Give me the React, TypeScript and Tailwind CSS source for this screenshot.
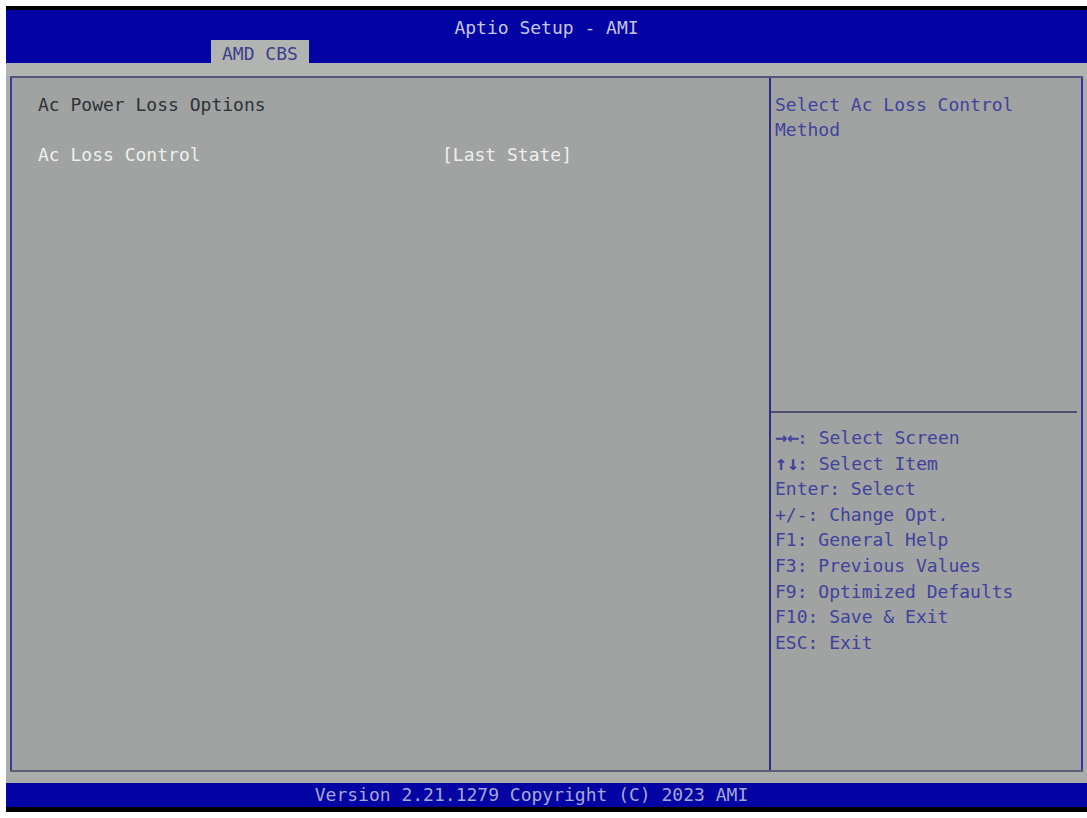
const mono = "font-['DejaVu_Sans_Mono','Liberation_Mono',monospace]";

const helpKeys = [
  { key: "→←", text: ": Select Screen", arrow: true },
  { key: "↑↓", text: ": Select Item", arrow: true },
  { key: "Enter", text: ": Select" },
  { key: "+/-", text: ": Change Opt." },
  { key: "F1", text: ": General Help" },
  { key: "F3", text: ": Previous Values" },
  { key: "F9", text: ": Optimized Defaults" },
  { key: "F10", text: ": Save & Exit" },
  { key: "ESC", text: ": Exit" },
];

export default function App() {
  return (
    <div className={`h-[818px] w-[1087px] bg-white pt-[6px] pl-[6px] pb-[6px] ${mono} text-[18px]`}>
      <div className="flex h-full flex-col border-t-4 border-black bg-[#abadab]">
        {/* title bar */}
        <div className="flex h-[53px] flex-col bg-[#0404a4]">
          <div className="pt-[5px] text-center leading-[25px] text-[#c4c6e6]">Aptio Setup - AMI</div>
          <div className="mt-auto flex pl-[205px]">
            <div className="h-[24px] bg-[#b2b4b2] px-[11px] leading-[28px] text-[#3c3e8c]">AMD CBS</div>
          </div>
        </div>
        <div className="h-[13px] bg-[#b2b4b2]" />

        {/* panels */}
        <div className="mx-[4px] flex flex-1 border-t-2 border-b-2 border-t-[#54567e] border-b-[#5c5e78] bg-[#a0a3a1]">
          <div className="w-[759px] border-l-2 border-[#3a3a9c] pt-[14px] pl-[26px] leading-[25px]">
            <div className="text-[#2e3138]">Ac Power Loss Options</div>
            <div className="h-[25px]" />
            <div className="flex text-[#eef0ee]">
              <div className="w-[404px]">Ac Loss Control</div>
              <div>[Last State]</div>
            </div>
          </div>
          <div className="flex flex-1 flex-col border-x-2 border-l-[#2c2e82] border-r-[#3434a6] leading-[25px] text-[#40429e]">
            <div className="h-[333px] pt-[14px] pl-[4px]">
              <div>Select Ac Loss Control</div>
              <div>Method</div>
            </div>
            <div className="mr-[4px] h-[2px] bg-[#4e5070]" />
            <div className="pt-[12px] pl-[4px] leading-[25.6px]">
              {helpKeys.map((h) => (
                <div key={h.key} className="whitespace-pre">
                  <span className={h.arrow ? "inline-block w-[22px] text-[20px] font-bold" : ""}>{h.key}</span>
                  {h.text}
                </div>
              ))}
            </div>
          </div>
        </div>

        <div className="h-[11px]" />
        {/* footer */}
        <div className="h-[29px] border-b-[5px] border-black bg-[#0404a4] pr-[30px] text-center leading-[24px] text-[#a6a8d2]">
          Version 2.21.1279 Copyright (C) 2023 AMI
        </div>
      </div>
    </div>
  );
}
